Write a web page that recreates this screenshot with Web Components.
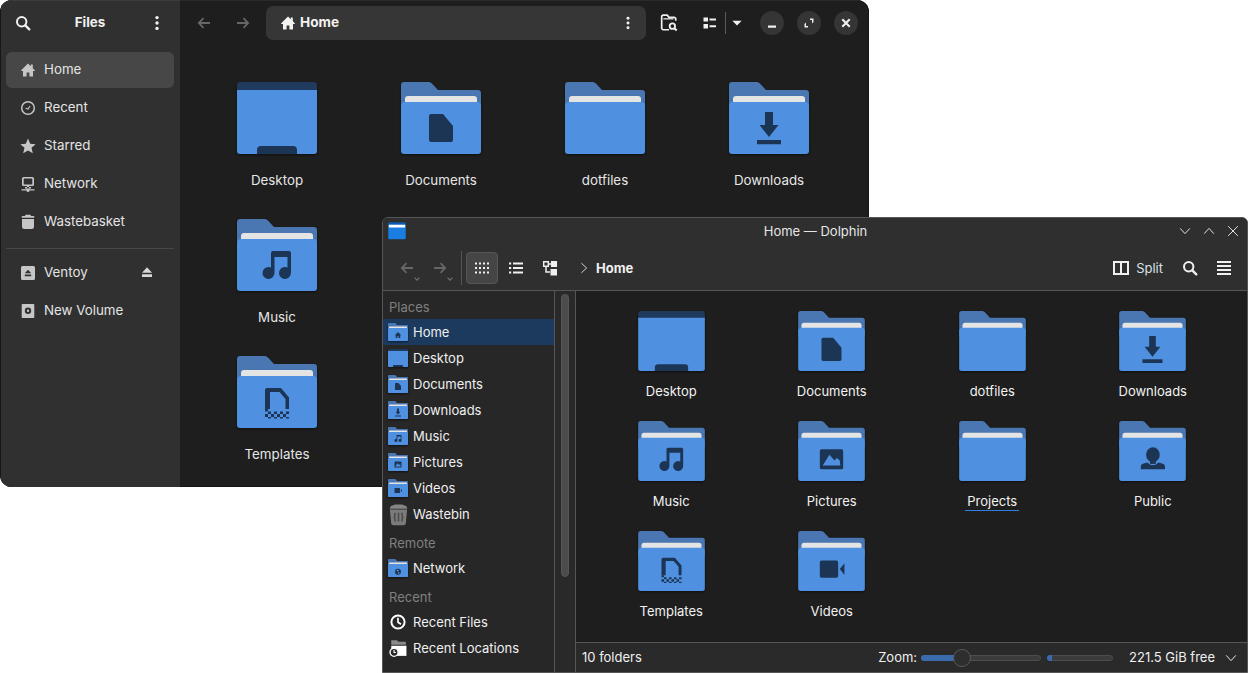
<!DOCTYPE html>
<html>
<head>
<meta charset="utf-8">
<title>Files and Dolphin</title>
<style>
  html, body { margin: 0; height: 100%; background: #fff; overflow: hidden; }
  body { font-family: Inter, "Noto Sans", sans-serif; }
</style>
</head>
<body>
<files-window></files-window>
<dolphin-window></dolphin-window>

<script>
// Desenhos dos ícones, todos em viewBox 16x16
const ICONS = {
  home: '<path fill="currentColor" d="M8 1.4 1.2 8.2v.7H3V14.6h3.6v-4h2.8v4H13V8.9h1.8v-.7L12.8 6.2V2.6h-2v1.6Z"/>',
  recent: '<circle cx="8" cy="8" r="6.3" fill="none" stroke="currentColor" stroke-width="1.5"/><path d="M5.6 8.2 8 9l2-3" fill="none" stroke="currentColor" stroke-width="1.1"/>',
  star: '<path fill="currentColor" d="M8 .6l2.2 5.1 5.5.5-4.2 3.6 1.3 5.5L8 12.4l-4.8 2.9 1.3-5.5L.3 6.2l5.5-.5Z"/>',
  network: '<path fill="currentColor" fill-rule="evenodd" d="M3.5 1h9A1.5 1.5 0 0 1 14 2.5v6A1.5 1.5 0 0 1 12.500 10h-9A1.500 1.500 0 0 1 2 8.500v-6A1.500 1.500 0 0 1 3.500 1Zm.2 1.500v6h8.600v-6ZM7 10h2v2H7ZM5 11h6v1.500H5ZM1.500 13.300h5a1.500 1.500 0 0 1 3 0h5v1.200h-5a1.500 1.500 0 0 1-3 0h-5Z"/>',
  trash: '<path fill="currentColor" d="M5.500.8h5L11 2h3.200v1.800H1.800V2H5ZM2 5h12v7.700A2.300 2.300 0 0 1 11.700 15H4.300A2.300 2.300 0 0 1 2 12.700Z"/>',
  usb: '<path fill="currentColor" fill-rule="evenodd" d="M2.500 1h11A1.500 1.500 0 0 1 15 2.500v11a1.500 1.500 0 0 1-1.500 1.500h-11A1.500 1.500 0 0 1 1 13.500v-11A1.500 1.500 0 0 1 2.500 1ZM8 4.700 4.800 8.300h6.400ZM4.800 9.500v1.700h6.400V9.500Z"/>',
  eject: '<path fill="currentColor" d="M8 2.200 13 7.700H3ZM3 9.300h10v2.700H3Z"/>',
  disk: '<path fill="currentColor" fill-rule="evenodd" d="M2.500 1h11a.8.8 0 0 1 .8.8v12.400a.8.800 0 0 1-.8.800h-11a.8.800 0 0 1-.8-.800V1.800a.8.800 0 0 1 .8-.8ZM8 4.500a3.200 3.200 0 1 0 0 6.400 3.200 3.200 0 0 0 0-6.400Zm0 2a1.200 1.200 0 1 1 0 2.400 1.200 1.200 0 0 1 0-2.400Z"/>',
  search: '<circle cx="6.700" cy="6.700" r="4.700" fill="none" stroke="currentColor" stroke-width="2"/><path d="m10.300 10.300 4 4" stroke="currentColor" stroke-width="2.400" stroke-linecap="round"/>',
  dots: '<circle cx="8" cy="2.600" r="1.700" fill="currentColor"/><circle cx="8" cy="8" r="1.700" fill="currentColor"/><circle cx="8" cy="13.400" r="1.700" fill="currentColor"/>',
  back: '<path d="M14 8H3M7.500 3.200 2.800 8l4.700 4.800" fill="none" stroke="currentColor" stroke-width="1.800"/>',
  forward: '<path d="M2 8h11M8.500 3.200 13.200 8l-4.700 4.800" fill="none" stroke="currentColor" stroke-width="1.800"/>',
  folderSearch: '<path d="M8 14H3a1.500 1.500 0 0 1-1.500-1.500v-10A1.500 1.500 0 0 1 3 1h3.400l1.600 2h4.500A1.500 1.500 0 0 1 14 4.500V6" fill="none" stroke="currentColor" stroke-width="1.500"/><path d="M3 4.300h9" stroke="currentColor" stroke-width="1.100"/><circle cx="11" cy="10.800" r="2.400" fill="none" stroke="currentColor" stroke-width="1.600"/><path d="m12.800 12.600 2 2" stroke="currentColor" stroke-width="1.800"/>',
  viewToggle: '<path fill="currentColor" d="M1.500 2.500h4.500v4H1.500ZM7.500 3.500H14v2H7.500ZM1.500 9h4.500v4.500H1.500ZM7.500 10.200H14v2H7.500Z"/>',
  caret: '<path fill="currentColor" d="M2.700 5.500h10.600L8 10.800Z"/>',
  minimize: '<path fill="currentColor" d="M4 10.500h8v2.200H4Z"/>',
  maximize: '<path fill="currentColor" d="M9 3.500h3.500V7L11 8.500V5H9ZM7 12.500H3.500V9L5 7.500V11h2Z"/>',
  close: '<path d="m4.300 4.300 7.400 7.400m0-7.400-7.400 7.400" stroke="currentColor" stroke-width="2.100"/>',
  chevDown: '<path d="m2.500 5 5.500 6 5.500-6" fill="none" stroke="currentColor" stroke-width="1.100"/>',
  chevUp: '<path d="m2.500 11 5.500-6 5.500 6" fill="none" stroke="currentColor" stroke-width="1.100"/>',
  chevRight: '<path d="m5 2.500 6 5.500-6 5.500" fill="none" stroke="currentColor" stroke-width="1.100"/>',
  x: '<path d="m2.500 2.500 11 11m0-11-11 11" stroke="currentColor" stroke-width="1.100"/>',
  grid: '<path fill="currentColor" d="M1 2.500h2v2H1Zm4 0h2v2H5Zm4 0h2v2H9Zm4 0h2v2h-2ZM1 7h2v2H1Zm4 0h2v2H5Zm4 0h2v2H9Zm4 0h2v2h-2ZM1 11.500h2v2H1Zm4 0h2v2H5Zm4 0h2v2H9Zm4 0h2v2h-2Z"/>',
  list: '<path fill="currentColor" d="M1 2.500h2.200v2H1Zm4 0h10v2H5ZM1 7h2.200v2H1Zm4 0h10v2H5ZM1 11.500h2.200v2H1Zm4 0h10v2H5Z"/>',
  tree: '<path fill="none" stroke="currentColor" stroke-width="1.500" d="M1.700 1.700h4.600v4.600H1.700ZM6.500 4h3.200M4 6.500v5.500h4M9.700 1.700h4.600v4.600H9.700Z"/><path fill="currentColor" d="M8.500 9h6.500v6.500H8.500Z"/><path fill="currentColor" d="M9 1h6v6H9Z"/>',
  split: '<path fill="none" stroke="currentColor" stroke-width="2" d="M1 2h14v12H1ZM8 2v12"/>',
  menu: '<path stroke="currentColor" stroke-width="1.900" d="M1 2h14M1 6h14M1 10h14M1 14h14"/>',
  clock: '<circle cx="8" cy="8" r="6.600" fill="none" stroke="currentColor" stroke-width="2"/><path d="M8 3.800V8.300l3 2" fill="none" stroke="currentColor" stroke-width="1.700"/>',
  recentDirs: '<path fill="#8a8a8a" d="M2 1h5l1.300 1.500H15V5H2Z"/><path fill="#fff" d="M2 6h13.500v9H2Z"/><circle cx="4.500" cy="11.800" r="3.600" fill="#272727" stroke="#fff" stroke-width="1.200"/><path d="M4.500 9.800v2.200h1.600" fill="none" stroke="#fff"/>',
  bin: '<path fill="#858585" d="M2.500 2.200 5.500 1h5l3 1.200.7 1.800H1.800Z"/><path fill="#7b7b7b" d="M2 4.500h12l-.9 9.500a1.500 1.500 0 0 1-1.500 1.400H4.400A1.500 1.500 0 0 1 2.900 14Z"/><path fill="none" stroke="#4e4e4e" stroke-width="1.200" d="M5.700 6.800Q4.700 9.700 5.700 12.800M10.300 6.800Q11.300 9.700 10.300 12.800M8 6.800v6"/>',
  appFolder: '<path fill="#0d5cae" d="M1 2A1 1 0 0 1 2 1h12a1 1 0 0 1 1 1V4H1Z"/><path fill="#1a7de0" d="M1 3h14v10.500a1 1 0 0 1-1 1H2a1 1 0 0 1-1-1Z"/><path fill="#fff" d="M1.500 3h13v2.200h-13Z"/>'
};

// Símbolo escuro no meio da pasta, viewBox 80x72 da própria pasta
const FOLDER_GLYPHS = {
  document: '<path d="M30 32h12l10 12v14a2 2 0 0 1-2 2H30a2 2 0 0 1-2-2V34a2 2 0 0 1 2-2Z"/>',
  download: '<path d="M36 30h8v13h5.500L40 55 30.500 43H36ZM28 58h24v4.300H28Z"/>',
  music: '<path fill-rule="evenodd" d="M36 32h16a2 2 0 0 1 2 2v20a6 6 0 1 1-3.500-5.500V38H37.500v16a6 6 0 1 1-3.500-5.500V34a2 2 0 0 1 2-2Z"/>',
  pictures: '<path fill-rule="evenodd" d="M28 34h24a2 2 0 0 1 2 2v20a2 2 0 0 1-2 2H28a2 2 0 0 1-2-2V36a2 2 0 0 1 2-2Zm1.500 19.500h21L50 47.500l-3.500-3-3 3-6-7Z"/>',
  video: '<path d="M28 35.500h18a2 2 0 0 1 2 2v16.500a2 2 0 0 1-2 2H28a2 2 0 0 1-2-2V37.500a2 2 0 0 1 2-2ZM50 45.700l5.500-7v14Z"/>',
  person: '<ellipse cx="40.500" cy="40.500" rx="8.200" ry="9"/><path d="M37 47h7v4.500h-7Z"/><path d="M26 58v-3c0-2.500 1.500-3.500 3.500-4l4.500-1.300c1.600 2 3.800 3.100 6.500 3.100s4.900-1.100 6.500-3.100l4.500 1.300c2 .5 3.500 1.500 3.500 4v3Z"/>',
  templates: '<path d="M30 32h14l8 9.500V53h-3.500V43l-6-7H33v17h-5V34a2 2 0 0 1 2-2Z"/><path d="M28 53h3v2.500h-3Zm3 2.500h3V58h-3ZM28 58h3v3h-3Zm6 0h3v3h-3Zm6 0h3v3h-3Zm6 0h3v3h-3Zm3-2.500h3V58h-3Zm-3 2.500M37 55.500h3V58h-3Zm6 0h3V58h-3ZM31 61h3v1.500h-3Zm6 0h3v1.500h-3Zm6 0h3v1.500h-3Zm6 0h3v1.500h-3Z"/>',
  house: '<path d="M40 36 27 48.500h4V60h6.500v-7h5v7H49V48.500h4Z"/>',
  globe: '<circle cx="40" cy="51" r="12"/><path fill="#5c9ae3" d="M35 44l6-1.500 2.500 3.500-3.500 3.500-4-1Zm5 9 6 1-1.500 5-3.500 1Z"/>'
};

class FolderIcon extends HTMLElement {
  connectedCallback() {
    const kind = this.getAttribute('kind') || '';
    const w = this.getAttribute('w') || 80;
    const h = this.getAttribute('h') || 72;
    let art;
    if (kind === 'desktop') {
      art = `
        <path fill="#1f3a5c" d="M3 0h74a3 3 0 0 1 3 3v8H0V3a3 3 0 0 1 3-3Z"/>
        <path fill="#4f91e0" d="M0 8h80v61a3 3 0 0 1-3 3H3a3 3 0 0 1-3-3Z"/>
        <path fill="#1c3554" d="M24 64h32a4 4 0 0 1 4 4v4H20v-4a4 4 0 0 1 4-4Z"/>`;
    } else {
      art = `
        <path fill="#4a76b1" d="M3 0h24c2 0 3 .6 4.200 1.800L37 8h40a3 3 0 0 1 3 3v20H0V3a3 3 0 0 1 3-3Z"/>
        <path fill="#e4e4e4" d="M7 14h66a3 3 0 0 1 3 3v8H4v-8a3 3 0 0 1 3-3Z"/>
        <path fill="#4f91e0" d="M4 20h72q4 0 4 4v45a3 3 0 0 1-3 3H3a3 3 0 0 1-3-3V24q0-4 4-4Z"/>
        <g fill="#1c3554">${FOLDER_GLYPHS[kind] || ''}</g>`;
    }
    this.attachShadow({ mode: 'open' }).innerHTML = `
      <style>
        :host { display: block; width: ${w}px; height: ${h}px; flex: none; }
        svg { display: block; overflow: visible; filter: drop-shadow(0 1px 1px rgba(0,0,0,.55)); }
      </style>
      <svg width="${w}" height="${h}" viewBox="0 0 80 72">${art}</svg>`;
  }
}

class UiIcon extends HTMLElement {
  connectedCallback() {
    const size = this.getAttribute('size') || 16;
    const name = this.getAttribute('name');
    this.attachShadow({ mode: 'open' }).innerHTML = `
      <style>
        :host { display: block; width: ${size}px; height: ${size}px; flex: none; }
        svg { display: block; }
      </style>
      <svg width="${size}" height="${size}" viewBox="0 0 16 16">${ICONS[name] || ''}</svg>`;
  }
}

// Item de uma das grades de arquivos
class FileTile extends HTMLElement {
  connectedCallback() {
    const big = this.hasAttribute('big');
    const kind = this.getAttribute('kind');
    const focused = this.hasAttribute('focused');
    this.attachShadow({ mode: 'open' }).innerHTML = `
      <style>
        :host { display: flex; flex-direction: column; align-items: center; min-width: 0; }
        span {
          box-sizing: border-box;
          margin-top: ${big ? 16 : 10}px;
          line-height: 20px;
          height: 20px;
          padding: 0 2px;
          font-size: ${big ? 13.33 : 13}px;
          color: ${big ? '#e6e6e6' : '#f2f2f2'};
          white-space: nowrap;
          ${focused ? 'border-bottom: 1px solid #2f7fe0;' : ''}
        }
      </style>
      <folder-icon kind="${kind}" w="${big ? 80 : 67}" h="${big ? 72 : 60}"></folder-icon>
      <span><slot></slot></span>`;
  }
}

// Linha da barra lateral do Nautilus
class FilesRow extends HTMLElement {
  connectedCallback() {
    const active = this.hasAttribute('active');
    const eject = this.hasAttribute('eject');
    this.attachShadow({ mode: 'open' }).innerHTML = `
      <style>
        :host {
          display: flex; align-items: center; gap: 8px; height: 36px; padding: 0 19px 0 14px;
          border-radius: 6px; font-size: 13.33px; color: #e4e4e4;
          background: ${active ? '#474747' : 'transparent'};
        }
        ui-icon { color: #c6c6c6; }
        span { flex: 1; white-space: nowrap; padding-bottom: 2px; }
        .eject { color: #d8d8d8; }
      </style>
      <ui-icon name="${this.getAttribute('icon')}"></ui-icon>
      <span><slot></slot></span>
      ${eject ? '<ui-icon class="eject" name="eject"></ui-icon>' : ''}`;
  }
}

class RoundButton extends HTMLElement {
  connectedCallback() {
    this.attachShadow({ mode: 'open' }).innerHTML = `
      <style>
        :host {
          display: flex; align-items: center; justify-content: center;
          width: 24px; height: 24px; border-radius: 50%; background: #353535; color: #f0f0f0; flex: none;
        }
      </style>
      <ui-icon name="${this.getAttribute('icon')}"></ui-icon>`;
  }
}

class FilesWindow extends HTMLElement {
  connectedCallback() {
    this.attachShadow({ mode: 'open' }).innerHTML = `
      <style>
        :host {
          position: absolute; left: 0; top: 0; width: 869px; height: 487px; box-sizing: border-box;
          display: flex; border-radius: 12px; overflow: hidden; background: #1e1e1e;
          box-shadow: inset 0 0 0 1px #161616;
        }
        aside { width: 179px; margin-left: 1px; background: #303030; flex: none; box-shadow: inset 0 1px 0 #3c3c3c; }
        .side-head { display: flex; align-items: center; height: 46px; padding: 0 15px 0 14px; color: #f0f0f0; }
        .side-head b { flex: 1; text-align: center; font-size: 13.33px; font-weight: 700; padding-bottom: 2px; }
        nav { display: flex; flex-direction: column; gap: 2px; padding: 6px 6px 0 5px; }
        hr { border: 0; height: 1px; background: #484848; margin: 6px 0 4px; }
        main { flex: 1; min-width: 0; }
        header { display: flex; align-items: center; height: 46px; padding-left: 16px; color: #f0f0f0; box-shadow: inset 0 1px 0 #2a2a2a; }
        .nav-btn { color: #666; margin-right: 23px; }
        .nav-btn.last { margin-right: 15px; }
        .path {
          display: flex; align-items: center; width: 380px; height: 34px; box-sizing: border-box;
          padding: 0 11px 0 14px; gap: 4px; background: #363636; border-radius: 7px;
          font-size: 13.6px; font-weight: 700; color: #f2f2f2;
        }
        .path span { flex: 1; padding-bottom: 2px; }
        .folder-search { margin-left: 14px; }
        .toggle { margin-left: 24px; }
        .divider { width: 1px; height: 22px; background: #5a5a5a; margin: 0 4px 0 7px; }
        .min { margin-left: 16px; }
        round-button + round-button { margin-left: 13px; }
        .grid {
          display: grid; grid-template-columns: repeat(4, 164px); grid-auto-rows: 137px;
          padding: 36px 0 0 15px;
        }
        .first { grid-column: 1; }
      </style>
      <aside>
        <div class="side-head">
          <ui-icon name="search" size="16"></ui-icon>
          <b>Files</b>
          <ui-icon name="dots" size="16"></ui-icon>
        </div>
        <nav>
          <files-row icon="home" active>Home</files-row>
          <files-row icon="recent">Recent</files-row>
          <files-row icon="star">Starred</files-row>
          <files-row icon="network">Network</files-row>
          <files-row icon="trash">Wastebasket</files-row>
          <hr>
          <files-row icon="usb" eject>Ventoy</files-row>
          <files-row icon="disk">New Volume</files-row>
        </nav>
      </aside>
      <main>
        <header>
          <ui-icon class="nav-btn" name="back"></ui-icon>
          <ui-icon class="nav-btn last" name="forward"></ui-icon>
          <div class="path">
            <ui-icon name="home"></ui-icon>
            <span>Home</span>
            <ui-icon name="dots" size="14"></ui-icon>
          </div>
          <ui-icon class="folder-search" name="folderSearch" size="18"></ui-icon>
          <ui-icon class="toggle" name="viewToggle"></ui-icon>
          <div class="divider"></div>
          <ui-icon name="caret" size="14"></ui-icon>
          <round-button class="min" icon="minimize"></round-button>
          <round-button icon="maximize"></round-button>
          <round-button icon="close"></round-button>
        </header>
        <div class="grid">
          <file-tile big kind="desktop">Desktop</file-tile>
          <file-tile big kind="document">Documents</file-tile>
          <file-tile big kind="">dotfiles</file-tile>
          <file-tile big kind="download">Downloads</file-tile>
          <file-tile big kind="music">Music</file-tile>
          <file-tile big class="first" kind="templates">Templates</file-tile>
        </div>
      </main>`;
  }
}

// Linha da lista de locais do Dolphin
class PlaceRow extends HTMLElement {
  connectedCallback() {
    const folder = this.getAttribute('folder');
    const icon = this.getAttribute('icon');
    const active = this.hasAttribute('active');
    this.attachShadow({ mode: 'open' }).innerHTML = `
      <style>
        :host {
          display: flex; align-items: center; gap: 5px; height: 26px; padding-left: 5px;
          font-size: 13px; color: #f0f0f0; background: ${active ? '#1b3a5e' : 'transparent'};
        }
        .slot-icon { width: 20px; display: flex; justify-content: center; flex: none; color: #fff; }
        span { white-space: nowrap; }
      </style>
      <div class="slot-icon">
        ${folder !== null
          ? `<folder-icon kind="${folder}" w="20" h="18"></folder-icon>`
          : `<ui-icon name="${icon}" size="${this.getAttribute('size') || 16}"></ui-icon>`}
      </div>
      <span><slot></slot></span>`;
  }
}

class PlaceLabel extends HTMLElement {
  connectedCallback() {
    this.attachShadow({ mode: 'open' }).innerHTML = `
      <style>
        :host {
          display: block; box-sizing: border-box; height: 28px; padding: 6px 0 0 6px;
          line-height: 20px; font-size: 13px; color: #808080;
        }
      </style>
      <slot></slot>`;
  }
}

class ZoomSlider extends HTMLElement {
  connectedCallback() {
    const w = this.getAttribute('w');
    const fill = this.getAttribute('fill');
    const knob = this.getAttribute('knob');
    this.attachShadow({ mode: 'open' }).innerHTML = `
      <style>
        :host { display: block; position: relative; width: ${w}px; height: 6px; flex: none; box-sizing: border-box;
          background: #3c3c3c; border: 1px solid #4c4c4c; border-radius: 3px; }
        .fill { position: absolute; left: -1px; top: -1px; bottom: -1px; width: ${fill}px; background: #3a6cad; border-radius: 3px 0 0 3px; }
        .knob { position: absolute; left: ${knob}px; top: -7px; width: 18px; height: 18px; box-sizing: border-box;
          border-radius: 50%; background: #2e2e2e; border: 1px solid #5a5a5a; }
      </style>
      <div class="fill"></div>
      ${knob ? '<div class="knob"></div>' : ''}`;
  }
}

class DolphinWindow extends HTMLElement {
  connectedCallback() {
    this.attachShadow({ mode: 'open' }).innerHTML = `
      <style>
        :host {
          position: absolute; left: 382px; top: 217px; width: 866px; height: 456px; box-sizing: border-box;
          display: flex; flex-direction: column; border: 1px solid #565656; border-radius: 6px 6px 0 0;
          overflow: hidden; background: #1e1e1e; color: #f0f0f0; font-size: 13px;
        }
        .title {
          display: flex; align-items: center; height: 32px; box-sizing: border-box; padding: 0 7px 6px 4px;
          background: #2f2f2f; flex: none;
        }
        .title b { flex: 1; text-align: center; font-weight: 400; color: #e6e6e6; margin-left: 46px; }
        .title .ctl { display: flex; gap: 10px; color: #e8e8e8; }
        .tools {
          display: flex; align-items: center; box-sizing: border-box; flex: none;
          background: #2f2f2f; border-bottom: 1px solid #565656; height: 41px; padding: 0 15px 4px 16px;
        }
        .hist { position: relative; color: #666; margin-right: 17px; }
        .hist.last { margin-right: 13px; }
        .hist i {
          position: absolute; right: -4px; bottom: -4px; width: 3px; height: 3px; border: solid #777;
          border-width: 0 1px 1px 0; transform: rotate(45deg);
        }
        .sep { width: 1px; height: 34px; background: #565656; margin-right: 4px; }
        .view {
          display: flex; align-items: center; justify-content: center; width: 32px; height: 32px; box-sizing: border-box;
          border: 1px solid #565656; border-radius: 4px; background: #454545; margin-right: 10px;
        }
        .tool2 { margin-right: 18px; }
        .crumb { margin: 0 5px 0 19px; color: #d8d8d8; }
        .here { font-weight: 700; flex: 1; }
        .split-label { margin: 0 19px 0 7px; color: #d8e0e8; }
        .menu { margin-left: 18px; }
        .body { flex: 1; min-height: 0; display: flex; }
        .places { width: 172px; flex: none; background: #272727; border-right: 1px solid #565656; box-sizing: border-box; height: 100%; }
        .gutter { width: 21px; flex: none; background: #292929; border-right: 1px solid #565656; box-sizing: border-box; padding: 3px 0 0 6px; }
        .thumb { width: 8px; height: 283px; box-sizing: border-box; border-radius: 4px; background: #4c4c4c; border: 1px solid #565656; }
        .right { flex: 1; min-width: 0; display: flex; flex-direction: column; }
        .grid {
          flex: 1; display: grid; grid-template-columns: repeat(4, 160.500px); grid-auto-rows: 110px;
          padding: 20px 0 0 15px; align-content: start;
        }
        .status {
          display: flex; align-items: center; height: 30px; box-sizing: border-box; padding: 0 9px 0 6px; flex: none;
          background: #2a2a2a; border-top: 1px solid #565656;
        }
        .status span { padding-bottom: 1px; }
        .status .count { flex: 1; }
        .status zoom-slider:first-of-type { margin-left: 4px; }
        .status zoom-slider + zoom-slider { margin-left: 6px; }
        .free { margin: 0 9px 0 16px; }
      </style>
      <div class="title">
        <ui-icon class="app" name="appFolder" size="20"></ui-icon>
        <b>Home — Dolphin</b>
        <div class="ctl">
          <ui-icon name="chevDown" size="14"></ui-icon>
          <ui-icon name="chevUp" size="14"></ui-icon>
          <ui-icon name="x" size="14"></ui-icon>
        </div>
      </div>
      <div class="tools">
        <div class="hist"><ui-icon name="back"></ui-icon><i></i></div>
        <div class="hist last"><ui-icon name="forward"></ui-icon><i></i></div>
        <div class="sep"></div>
        <div class="view"><ui-icon name="grid"></ui-icon></div>
        <ui-icon class="tool2" name="list"></ui-icon>
        <ui-icon name="tree"></ui-icon>
        <ui-icon class="crumb" name="chevRight" size="14"></ui-icon>
        <span class="here">Home</span>
        <ui-icon name="split"></ui-icon>
        <span class="split-label">Split</span>
        <ui-icon name="search"></ui-icon>
        <ui-icon class="menu" name="menu"></ui-icon>
      </div>
      <div class="body">
        <div class="places">
          <place-label>Places</place-label>
          <place-row folder="house" active>Home</place-row>
          <place-row folder="desktop">Desktop</place-row>
          <place-row folder="document">Documents</place-row>
          <place-row folder="download">Downloads</place-row>
          <place-row folder="music">Music</place-row>
          <place-row folder="pictures">Pictures</place-row>
          <place-row folder="video">Videos</place-row>
          <place-row icon="bin" size="23">Wastebin</place-row>
          <place-label>Remote</place-label>
          <place-row folder="globe">Network</place-row>
          <place-label>Recent</place-label>
          <place-row icon="clock" size="16">Recent Files</place-row>
          <place-row icon="recentDirs" size="18">Recent Locations</place-row>
        </div>
        <div class="gutter"><div class="thumb"></div></div>
        <div class="right">
          <div class="grid">
            <file-tile kind="desktop">Desktop</file-tile>
            <file-tile kind="document">Documents</file-tile>
            <file-tile kind="">dotfiles</file-tile>
            <file-tile kind="download">Downloads</file-tile>
            <file-tile kind="music">Music</file-tile>
            <file-tile kind="pictures">Pictures</file-tile>
            <file-tile kind="" focused>Projects</file-tile>
            <file-tile kind="person">Public</file-tile>
            <file-tile kind="templates">Templates</file-tile>
            <file-tile kind="video">Videos</file-tile>
          </div>
          <div class="status">
            <span class="count">10 folders</span>
            <span>Zoom:</span>
            <zoom-slider w="120" fill="40" knob="31"></zoom-slider>
            <zoom-slider w="66" fill="5"></zoom-slider>
            <span class="free">221.5 GiB free</span>
            <ui-icon name="chevDown" size="14"></ui-icon>
          </div>
        </div>
      </div>`;
  }
}

customElements.define('folder-icon', FolderIcon);
customElements.define('ui-icon', UiIcon);
customElements.define('file-tile', FileTile);
customElements.define('files-row', FilesRow);
customElements.define('round-button', RoundButton);
customElements.define('files-window', FilesWindow);
customElements.define('place-row', PlaceRow);
customElements.define('place-label', PlaceLabel);
customElements.define('zoom-slider', ZoomSlider);
customElements.define('dolphin-window', DolphinWindow);
</script>
</body>
</html>
